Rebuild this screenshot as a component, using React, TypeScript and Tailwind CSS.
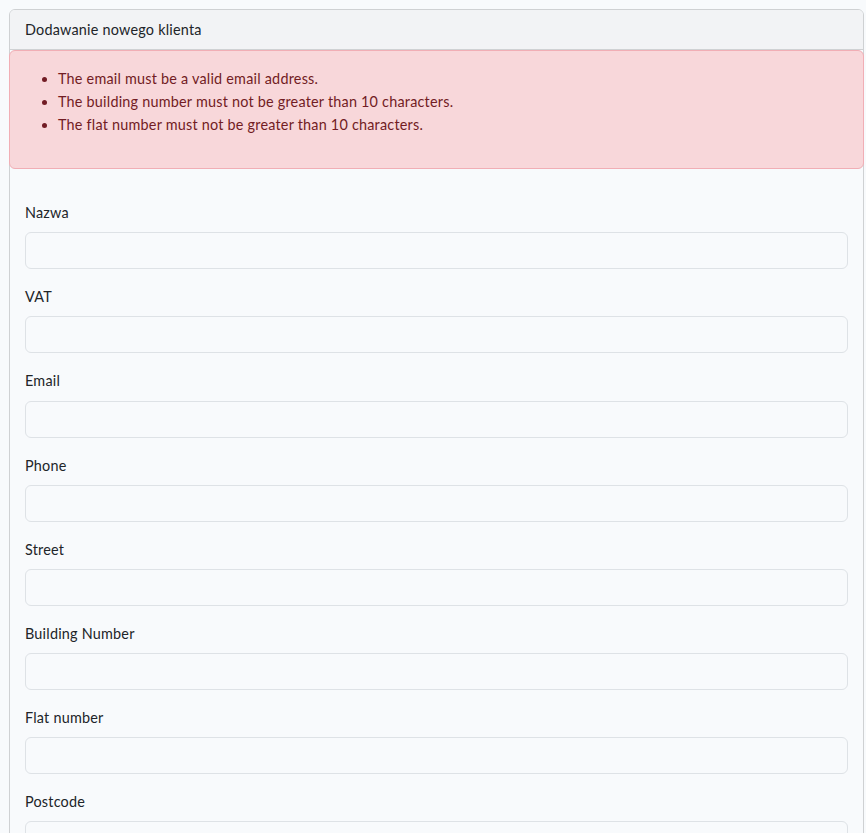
import React from "react";

const fields = [
  "Nazwa",
  "VAT",
  "Email",
  "Phone",
  "Street",
  "Building Number",
  "Flat number",
  "Postcode",
];

const errors = [
  "The email must be a valid email address.",
  "The building number must not be greater than 10 characters.",
  "The flat number must not be greater than 10 characters.",
];

export default function App() {
  return (
    <div
      className="min-h-[833px] bg-[#f8fafc] pl-[9px] pt-[9px] text-[14.4px] leading-[23.04px] tracking-[0.22px] text-[#212529] overflow-hidden"
      style={{ fontFamily: "Lato, 'Noto Sans', sans-serif" }}
    >
      <div className="w-[855px] rounded-[6px] border border-[#cfd1d3] bg-[#f8fafc]">
        <div className="rounded-t-[5px] border-b border-[#cfd1d3] bg-[#f2f3f5] px-[15px] py-[8px]">
          Dodawanie nowego klienta
        </div>
        <div className="-mx-px rounded-[6px] border border-[#f1aeb5] bg-[#f8d7da] p-4 text-[#721c24]">
          <ul className="mb-4 list-disc pl-8">
            {errors.map((e) => (
              <li key={e}>{e}</li>
            ))}
          </ul>
        </div>
        <div className="px-[15px] pt-8">
          {fields.map((f) => (
            <div key={f} className="mb-4">
              <label className="mb-[8px] block">{f}</label>
              <div className="h-[37.1px] w-full rounded-[6px] border border-[#dee2e6] bg-[#f8fafc]" />
            </div>
          ))}
        </div>
      </div>
    </div>
  );
}
